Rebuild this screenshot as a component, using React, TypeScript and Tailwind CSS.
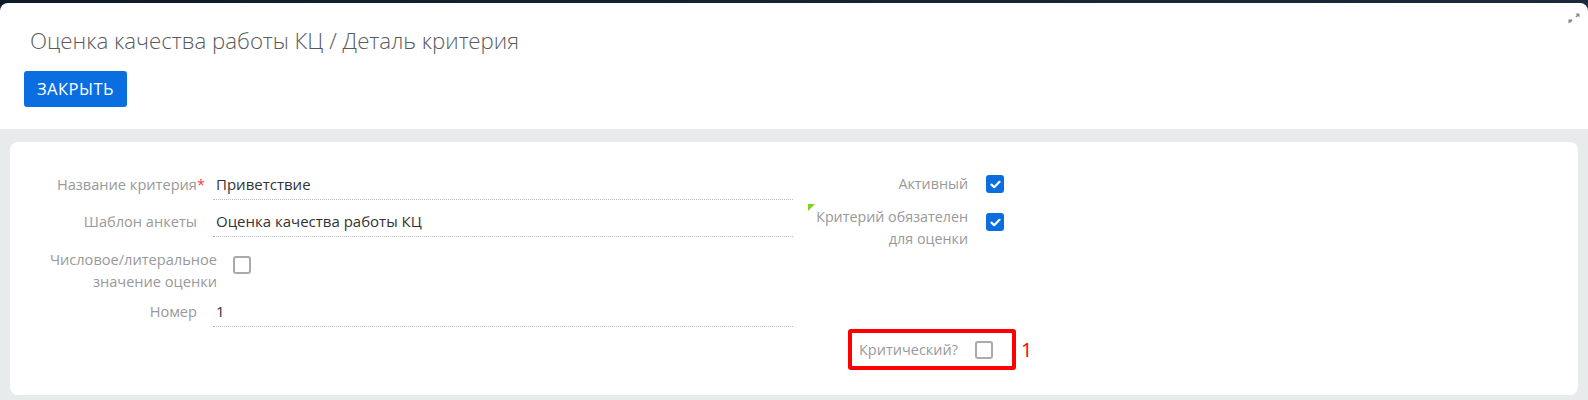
import { ReactNode } from 'react'

function Checkbox({ checked = false }: { checked?: boolean }) {
  if (checked) {
    return (
      <span className="flex h-[18px] w-[18px] shrink-0 items-center justify-center rounded-[3px] bg-[#0a6ee0]">
        <svg width="11" height="9" viewBox="0 0 11 9" fill="none">
          <path d="M1.5 4.6 4.2 7.2 9.5 1.8" stroke="#fff" strokeWidth="2.2" strokeLinecap="round" strokeLinejoin="round" />
        </svg>
      </span>
    )
  }
  return <span className="block h-[18px] w-[18px] shrink-0 rounded-[3px] border-2 border-[#aaaaaa] bg-white" />
}

function FieldRow({ label, required, value, labelPad }: { label: string; required?: boolean; value: string; labelPad: string }) {
  return (
    <div className="flex h-[30px] items-center">
      <div className={`w-[196px] shrink-0 text-right text-[14.6px] text-[#999] ${labelPad}`}>
        {label}
        {required && <span className="text-[#f04438]">*</span>}
      </div>
      <div className="ml-[7px] flex h-full flex-1 items-center border-b border-dotted border-[#b9b9b9] pl-[3px] text-[15px] text-[#333]">
        {value}
      </div>
    </div>
  )
}

function SideRow({ label, children, className = '' }: { label: ReactNode; children: ReactNode; className?: string }) {
  return (
    <div className={`flex items-start ${className}`}>
      <div className="w-[175px] shrink-0 text-right text-[14.3px] leading-[22px] text-[#999]">{label}</div>
      <div className="ml-[18px]">{children}</div>
    </div>
  )
}

export default function App() {
  return (
    <div className="min-h-screen bg-[#e8ebec]" style={{ fontFamily: '"Open Sans", "Noto Sans", sans-serif' }}>
      <div className="bg-gradient-to-r from-[#0f1b29] to-[#1b2a3a] pt-[3px]">
        <div className="relative h-[126px] rounded-t-lg bg-white pl-[24px] pt-[23px]">
          <h1
            className="pl-[6px] text-[22.3px] font-light leading-[30px] text-[#5a5a5a]"
            style={{ fontFamily: '"Open Sans Light", "Open Sans", sans-serif' }}
          >
            Оценка качества работы КЦ / Деталь критерия
          </h1>
          <button className="mt-[15px] h-[36px] rounded-[3px] bg-[#0a6ee0] px-[13px] text-[16.5px] tracking-[0.5px] text-white">
            ЗАКРЫТЬ
          </button>
          {/* expand toggle */}
          <svg className="absolute right-[8px] top-[10px]" width="12" height="11" viewBox="0 0 12 11">
            <path d="M7.5 0.5H11.5V4.5Z" fill="#888" />
            <path d="M10.5 1.5 8 4" stroke="#888" strokeWidth="1.4" />
            <path d="M0.5 10.5V6.5H4.5Z" fill="#888" />
            <path d="M1.5 9.5 4 7" stroke="#888" strokeWidth="1.4" />
          </svg>
        </div>
      </div>

      <div className="mx-[10px] mt-[13px] flex h-[253px] rounded-lg bg-white pt-[28px]">
        {/* left column */}
        <div className="flex w-[783px] shrink-0 flex-col">
          <FieldRow label="Название критерия" required value="Приветствие" labelPad="pr-[1px]" />
          <div className="mt-[7px]">
            <FieldRow label="Шаблон анкеты" value="Оценка качества работы КЦ" labelPad="pr-[9px]" />
          </div>
          <div className="mt-[11px] flex items-start">
            <div className="w-[207px] shrink-0 text-right text-[14.6px] leading-[22px] text-[#999]">
              Числовое/литеральное
              <br />
              значение оценки
            </div>
            <div className="ml-[16px] mt-[8px]">
              <Checkbox />
            </div>
          </div>
          <div className="mt-[5px]">
            <FieldRow label="Номер" value="1" labelPad="pr-[9px]" />
          </div>
        </div>

        {/* right column */}
        <div className="flex flex-col">
          <SideRow label="Активный" className="mt-[3px] h-[30px] items-center">
            <div className="mt-[2px]">
              <Checkbox checked />
            </div>
          </SideRow>
          <SideRow
            className="mt-[3px]"
            label={
              <span className="relative inline-block">
                <span className="absolute left-[-8px] top-[-2px] h-0 w-0 border-r-[7px] border-t-[7px] border-r-transparent border-t-[#7ed321]" />
                Критерий обязателен
                <br />
                для оценки
              </span>
            }
          >
            <div className="mt-[7px]">
              <Checkbox checked />
            </div>
          </SideRow>
          <div className="ml-[55px] mt-[79px] flex items-center">
            <div className="flex h-[41px] items-center rounded-[3px] border-4 border-[#ff0000] pl-[7px] pr-[19px]">
              <span className="text-[14.5px] text-[#999]">Критический?</span>
              <span className="ml-[17px]">
                <Checkbox />
              </span>
            </div>
            <span className="ml-[5px] text-[20px] leading-none text-[#ff0000]">1</span>
          </div>
        </div>
      </div>
    </div>
  )
}
